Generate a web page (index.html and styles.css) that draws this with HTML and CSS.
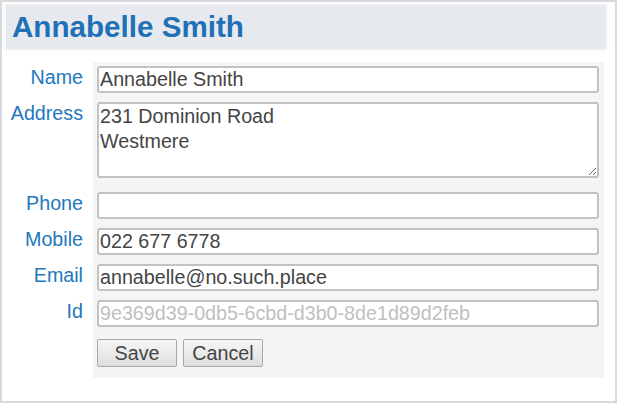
FILE: index.html
```html
<!DOCTYPE html>
<html>
<head>
<meta charset="utf-8">
<link rel="stylesheet" href="styles.css">
</head>
<body>
<div class="frame">
  <div class="header"><h1 class="title">Annabelle Smith</h1></div>
  <form class="form">
    <div class="panel"></div>
    <label class="label r1">Name</label>
    <input class="field r1" type="text" value="Annabelle Smith">
    <label class="label r2">Address</label>
    <textarea class="field area r2">231 Dominion Road
Westmere</textarea>
    <label class="label r3">Phone</label>
    <input class="field r3" type="text" value="">
    <label class="label r4">Mobile</label>
    <input class="field r4" type="text" value="022 677 6778">
    <label class="label r5">Email</label>
    <input class="field r5" type="text" value="annabelle@no.such.place">
    <label class="label r6">Id</label>
    <input class="field idfield r6" type="text" value="9e369d39-0db5-6cbd-d3b0-8de1d89d2feb" readonly>
    <div class="buttons r7">
      <button class="btn" type="button">Save</button>
      <button class="btn" type="button">Cancel</button>
    </div>
  </form>
</div>
</body>
</html>
```
FILE: styles.css
```css
html, body {
  margin: 0;
  padding: 0;
  background: #ffffff;
}
.frame {
  box-sizing: border-box;
  width: 617px;
  height: 403px;
  border: 2px solid #d9d9d9;
  padding: 3px 0 0 4px;
  font-family: "Liberation Sans", Arial, sans-serif;
}
.header {
  width: 600px;
  height: 44px;
  box-sizing: border-box;
  background: #e6eaee;
  box-shadow: 0 0 3px 1px rgba(230, 234, 238, 0.7);
  padding: 5px 0 0 6px;
}
.title {
  margin: 0;
  font-size: 29.6px;
  line-height: 34px;
  font-weight: bold;
  color: #1f70b6;
}
.form {
  display: grid;
  grid-template-columns: 87px 511px;
  grid-template-rows: 4px 36px 90px 36px 36px 36px 39px 28px 11px;
  margin-top: 13px;
}
.panel {
  grid-column: 2;
  grid-row: 1 / 10;
  background: #f4f5f7;
}
.r1 { grid-row: 2; }
.r2 { grid-row: 3; }
.r3 { grid-row: 4; }
.r4 { grid-row: 5; }
.r5 { grid-row: 6; }
.r6 { grid-row: 7; }
.r7 { grid-row: 8; }
.label {
  grid-column: 1;
  align-self: start;
  text-align: right;
  padding-right: 10px;
  font-size: 19.7px;
  line-height: 22px;
  color: #2277bd;
}
.field {
  grid-column: 2;
  align-self: start;
  box-sizing: border-box;
  margin: 0 0 0 4px;
  width: 502px;
  height: 27px;
  border: 2px solid #c2c2c2;
  border-radius: 3px;
  padding: 0 1px;
  font-family: "Liberation Sans", Arial, sans-serif;
  font-size: 19.7px;
  line-height: 22px;
  color: #444444;
  background: #ffffff;
  outline: none;
}
.area {
  height: 76px;
  line-height: 25px;
  padding: 0 1px;
  resize: vertical;
}
.idfield {
  color: #c0c0c0;
}
.buttons {
  grid-column: 2;
  display: flex;
  gap: 6px;
  padding-left: 4px;
}
.btn {
  box-sizing: border-box;
  width: 80px;
  height: 28px;
  padding: 0;
  border: 1px solid #a8a8a8;
  border-radius: 2px;
  background: linear-gradient(#f6f6f6, #dedede);
  font-family: "Liberation Sans", Arial, sans-serif;
  font-size: 19.7px;
  color: #444444;
}
```
